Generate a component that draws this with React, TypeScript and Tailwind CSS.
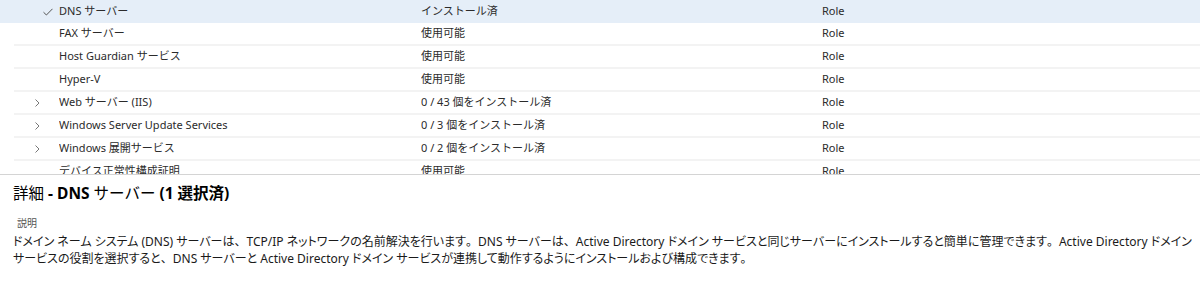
import React from "react";

type Row = {
  name: string;
  status: string;
  type: string;
  icon?: "check" | "chevron";
  selected?: boolean;
};

const rows: Row[] = [
  { name: "DNS サーバー", status: "インストール済", type: "Role", icon: "check", selected: true },
  { name: "FAX サーバー", status: "使用可能", type: "Role" },
  { name: "Host Guardian サービス", status: "使用可能", type: "Role" },
  { name: "Hyper-V", status: "使用可能", type: "Role" },
  { name: "Web サーバー (IIS)", status: "0 / 43 個をインストール済", type: "Role", icon: "chevron" },
  { name: "Windows Server Update Services", status: "0 / 3 個をインストール済", type: "Role", icon: "chevron" },
  { name: "Windows 展開サービス", status: "0 / 2 個をインストール済", type: "Role", icon: "chevron" },
  { name: "デバイス正常性構成証明", status: "使用可能", type: "Role" },
];

const RowIcon = ({ icon }: { icon?: Row["icon"] }) => {
  if (icon === "check")
    return (
      <svg width="10" height="8" viewBox="0 0 10 8" className="ml-[29px]">
        <path d="M0.5 4.2 L3.4 7 L9.5 0.8" fill="none" stroke="#555" strokeWidth="1" />
      </svg>
    );
  if (icon === "chevron")
    return (
      <svg width="5" height="8" viewBox="0 0 5 8" className="ml-[21px]">
        <path d="M0.5 0.5 L4 4 L0.5 7.5" fill="none" stroke="#777" strokeWidth="1" />
      </svg>
    );
  return null;
};

// keep 、 and 。 full width while the kana use proportional widths
const Jp = ({ text }: { text: string }) => (
  <>
    {text.split(/([、。])/).map((part, i) =>
      part === "、" || part === "。" ? (
        <span key={i} className="[font-feature-settings:normal]">
          {part}
        </span>
      ) : (
        part
      )
    )}
  </>
);

export default function App() {
  return (
    <div className="w-[1200px] h-[282px] bg-white overflow-hidden text-[#2b2b2b] font-['Noto_Sans','Noto_Sans_CJK_JP',sans-serif]">
      <div className="h-[174px] overflow-hidden border-b border-[#d4d4d4] box-content">
        {rows.map((r) => (
          <div key={r.name} className={r.selected ? "bg-[#e5eef8]" : ""}>
            <div
              className={
                "ml-[14px] h-[23px] flex items-center text-[11px] " +
                (r.selected ? "" : "border-b-2 border-[#f3f3f3]")
              }
            >
              <div className="w-[45px] flex items-center">
                <RowIcon icon={r.icon} />
              </div>
              <div className="w-[362px] truncate">{r.name}</div>
              <div className="w-[401px] truncate">{r.status}</div>
              <div>{r.type}</div>
            </div>
          </div>
        ))}
      </div>
      <div className="pl-[13px] pt-[7px]">
        <h2 className="text-[15.5px] leading-[22px] font-bold text-black">
          <span className="font-normal">詳細</span> - DNS <span className="font-normal">サーバー</span> (1 選択済)
        </h2>
        <div className="mt-[12px] pl-[4px] text-[10px] leading-[14px] text-[#555]">説明</div>
        <p className="mt-[3px] text-[12px] leading-[17px] text-[#1a1a1a] whitespace-nowrap overflow-hidden [font-feature-settings:'palt']">
          <Jp text="ドメイン ネーム システム (DNS) サーバーは、TCP/IP ネットワークの名前解決を行います。DNS サーバーは、Active Directory ドメイン サービスと同じサーバーにインストールすると簡単に管理できます。Active Directory ドメイン" />
          <br />
          <Jp text="サービスの役割を選択すると、DNS サーバーと Active Directory ドメイン サービスが連携して動作するようにインストールおよび構成できます。" />
        </p>
      </div>
    </div>
  );
}
